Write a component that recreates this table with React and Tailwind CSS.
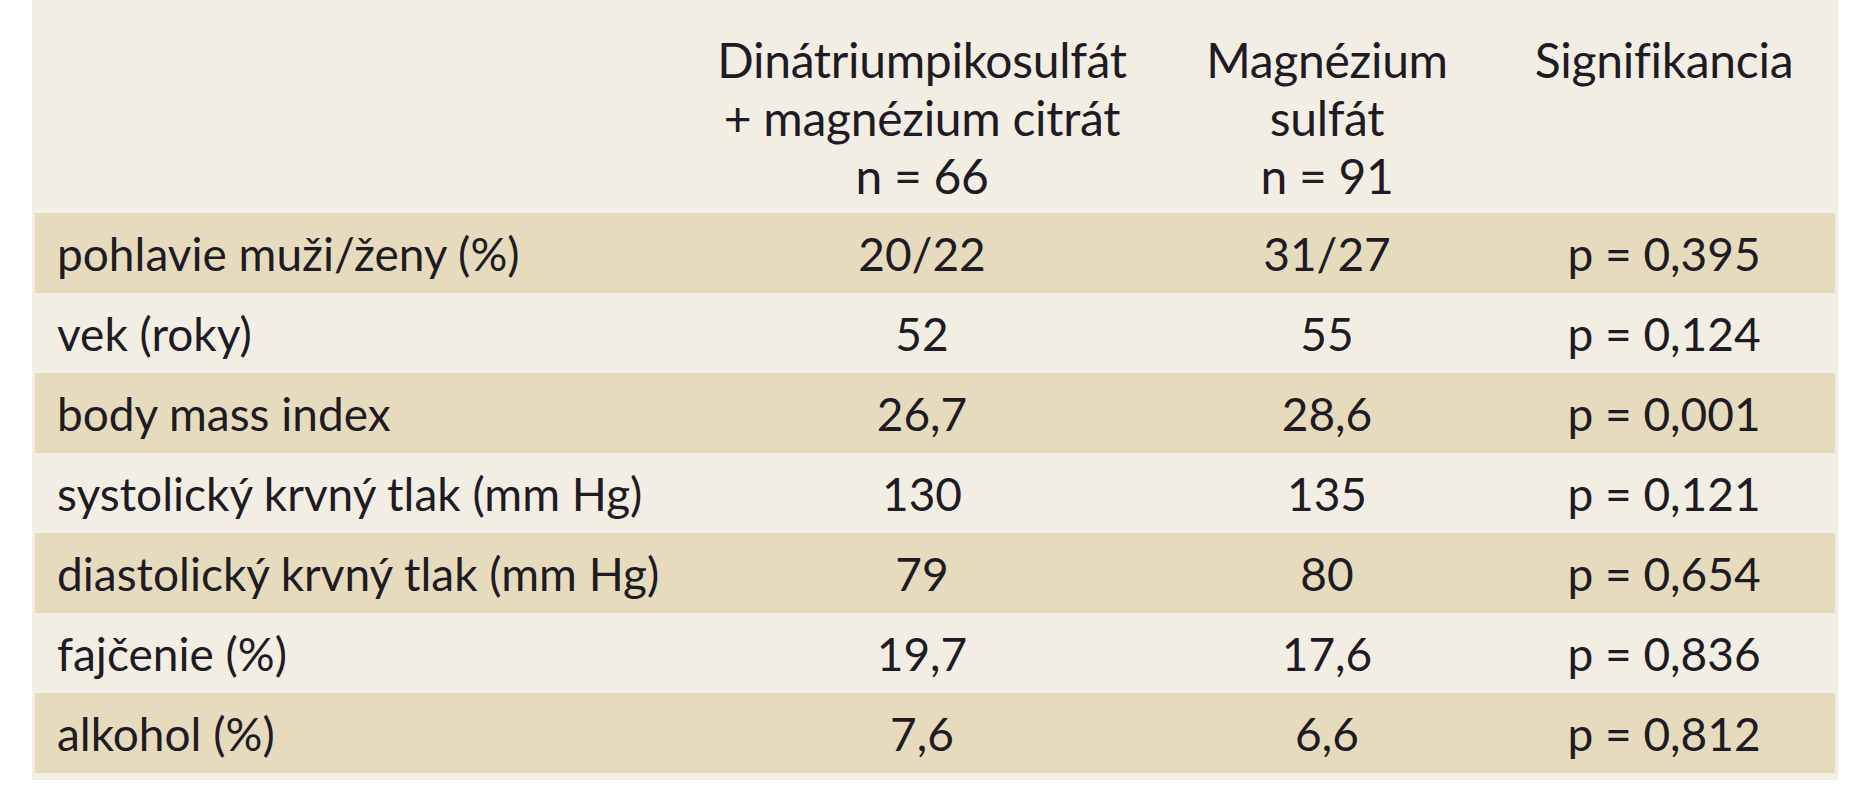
import React from "react";

const rows = [
  ["pohlavie muži/ženy (%)", "20/22", "31/27", "p = 0,395"],
  ["vek (roky)", "52", "55", "p = 0,124"],
  ["body mass index", "26,7", "28,6", "p = 0,001"],
  ["systolický krvný tlak (mm Hg)", "130", "135", "p = 0,121"],
  ["diastolický krvný tlak (mm Hg)", "79", "80", "p = 0,654"],
  ["fajčenie (%)", "19,7", "17,6", "p = 0,836"],
  ["alkohol (%)", "7,6", "6,6", "p = 0,812"],
];

const App = () => {
  return (
    <div className="w-full min-h-[800px] bg-white pl-[32px] font-['Lato',sans-serif] text-[#1e1b24]">
      <div className="w-[1806px] bg-[#f3eee3] px-[3px] pb-[7px]">
        {/* Header */}
        <div className="grid grid-cols-[655px_464px_346px_328px] h-[213px] pt-[31px] text-[48px] leading-[58px] tracking-[-0.3px] text-center border-b-[3px] border-b-[#f6f2ea]">
          <div></div>
          <div>
            Dinátriumpikosulfát
            <br />+ magnézium citrát
            <br />n = 66
          </div>
          <div>
            Magnézium
            <br />
            sulfát
            <br />n = 91
          </div>
          <div>Signifikancia</div>
        </div>

        {/* Body */}
        {rows.map((row, index) => (
          <div
            key={index}
            className={
              "grid grid-cols-[655px_464px_346px_328px] h-[80px] items-center text-[46px] " +
              (index % 2 === 0 ? "bg-[#e6dcbd]" : "bg-[#f3eee3]")
            }
          >
            <div className="pl-[22px]">{row[0]}</div>
            <div className="text-center">{row[1]}</div>
            <div className="text-center">{row[2]}</div>
            <div className="text-center">{row[3]}</div>
          </div>
        ))}
      </div>
    </div>
  );
};

export default App;
